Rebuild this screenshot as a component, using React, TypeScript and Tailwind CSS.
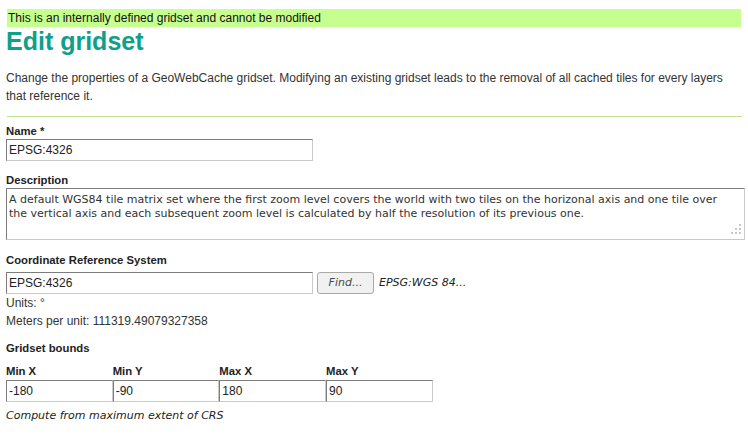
const inputCls =
  "h-[22px] border border-t-[#7d7d7d] border-l-[#7d7d7d] border-r-[#cacaca] border-b-[#cacaca] bg-white pl-[2px] text-[12px] text-[#222] outline-none";

const Label = ({ text, className = "" }: { text: string; className?: string }) => (
  <div className={`text-[11.3px] font-bold leading-[13px] text-[#222] ${className}`}>{text}</div>
);

const bounds = [
  { label: "Min X", value: "-180" },
  { label: "Min Y", value: "-90" },
  { label: "Max X", value: "180" },
  { label: "Max Y", value: "90" },
];

export default function App() {
  return (
    <div className="min-h-[436px] bg-white pl-[6px] pt-[9px] font-['Liberation_Sans',Arial,sans-serif] text-[12px] text-[#333]">
      <div className="ml-[1px] h-[18px] w-[734px] bg-[#c6ff8f] pl-[1px] leading-[18px] text-[#111]">
        This is an internally defined gridset and cannot be modified
      </div>
      <h1 className="text-[25px] font-bold leading-[28px] text-[#0fa08b]">Edit gridset</h1>
      <p className="mt-[14px] w-[738px] leading-[18px]">
        Change the properties of a GeoWebCache gridset. Modifying an existing gridset leads to the removal of all
        cached tiles for every layers that reference it.
      </p>
      <div className="ml-[1px] mt-[11px] h-px w-[735px] bg-[#c3e48f]" />

      {/* name */}
      <Label text="Name *" className="mt-[8px]" />
      <input readOnly value="EPSG:4326" className={`mt-px block w-[307px] ${inputCls}`} />

      {/* description */}
      <Label text="Description" className="mt-[13px]" />
      <div className="relative mt-px h-[52px] w-[739px] border border-t-[#7d7d7d] border-l-[#7d7d7d] border-r-[#cacaca] border-b-[#cacaca] bg-white pl-[2px] pr-[10px] pt-[4px] font-['DejaVu_Sans',Verdana,sans-serif] text-[11px] leading-[14px] text-[#333]">
        A default WGS84 tile matrix set where the first zoom level covers the world with two tiles on the horizonal
        axis and one tile over the vertical axis and each subsequent zoom level is calculated by half the resolution
        of its previous one.
        <div className="absolute bottom-[5px] right-[3px] grid grid-cols-[repeat(3,2px)] gap-[2px]">
          <span />
          <span />
          <span className="h-[2px] bg-[#c8c8c8]" />
          <span />
          <span className="h-[2px] bg-[#c8c8c8]" />
          <span className="h-[2px] bg-[#c8c8c8]" />
          <span className="h-[2px] bg-[#c8c8c8]" />
          <span className="h-[2px] bg-[#c8c8c8]" />
          <span className="h-[2px] bg-[#c8c8c8]" />
        </div>
      </div>

      {/* crs */}
      <Label text="Coordinate Reference System" className="mt-[14px]" />
      <div className="mt-[5px] flex items-center">
        <input readOnly value="EPSG:4326" className={`w-[307px] ${inputCls}`} />
        <button className="ml-[4px] h-[22px] w-[57px] rounded-[3px] border border-[#a9a9a9] bg-[#f1f1f1] font-['DejaVu_Sans',Verdana,sans-serif] text-[11px] italic text-[#4a4a4a]">
          Find...
        </button>
        <span className="ml-[5px] font-['DejaVu_Sans',Verdana,sans-serif] text-[11px] italic text-[#222]">
          EPSG:WGS 84...
        </span>
      </div>
      <div className="leading-[18px]">Units: °</div>
      <div className="leading-[18px]">Meters per unit: 111319.49079327358</div>

      {/* bounds */}
      <Label text="Gridset bounds" className="mt-[12px]" />
      <div className="mt-[10px] grid grid-cols-[repeat(4,106.67px)]">
        {bounds.map((b) => (
          <div key={b.label}>
            <Label text={b.label} />
            <input readOnly value={b.value} className={`mt-[2px] block w-full ${inputCls}`} />
          </div>
        ))}
      </div>
      <div className="mt-[7px] font-['DejaVu_Sans',Verdana,sans-serif] text-[11px] italic leading-[14px] text-[#222]">
        Compute from maximum extent of CRS
      </div>
    </div>
  );
}
